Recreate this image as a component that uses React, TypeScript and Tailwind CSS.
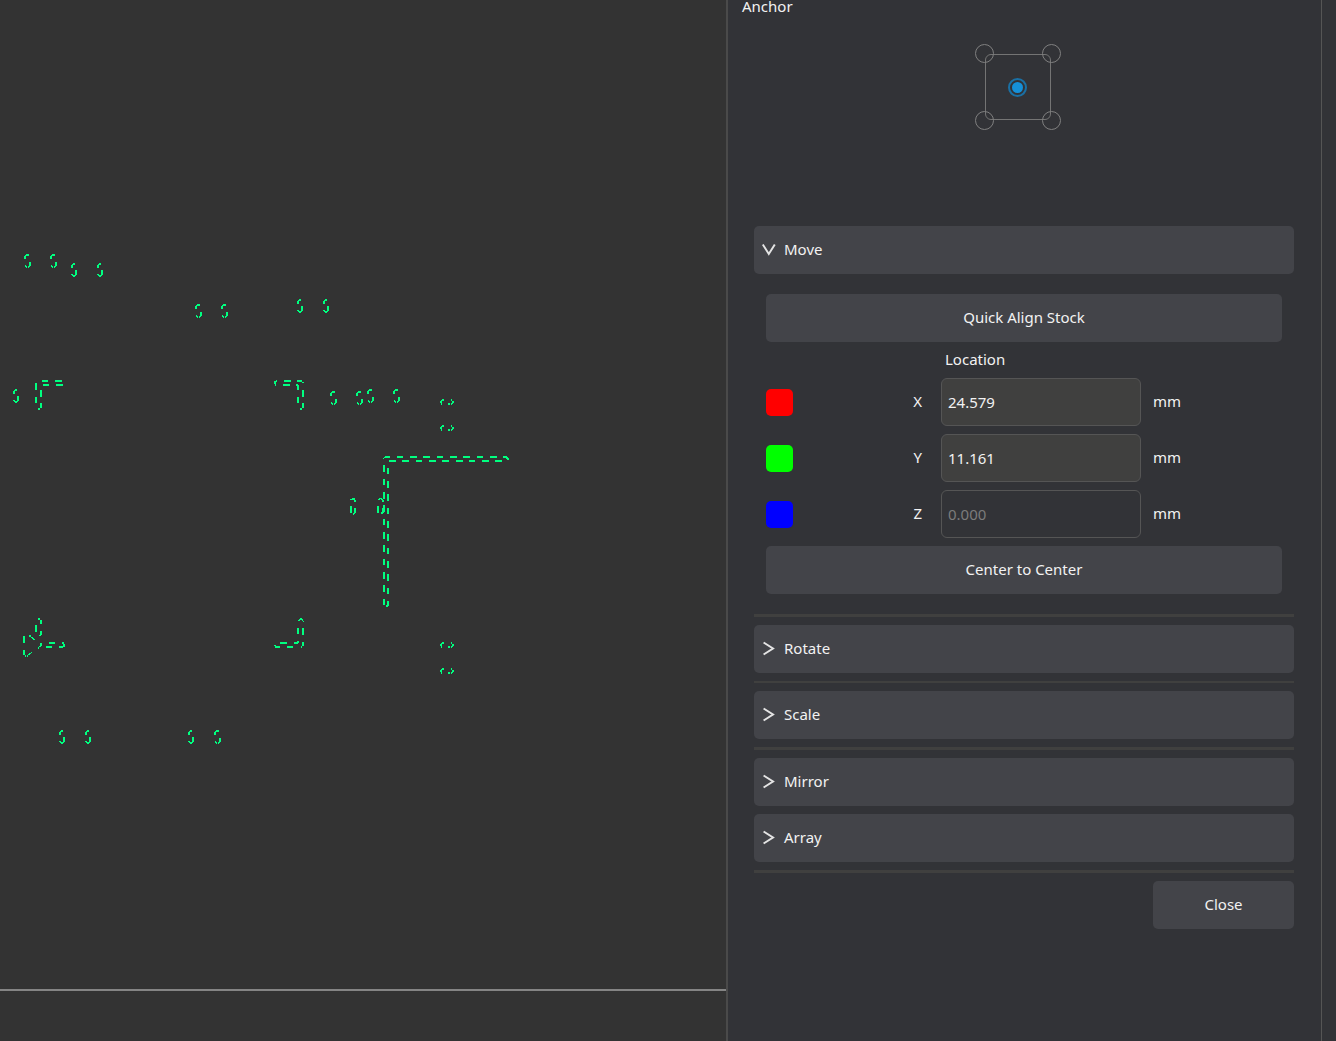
import { useState } from "react";

type Rect = [number, number, number, number];
type Point = [number, number];

const WIDE_PAD: Rect[] = [
  [2, 0, 3, 2], [1, 1, 1, 1], [0, 2, 2, 3], [5, 8, 2, 4], [4, 12, 2, 1], [4, 13, 1, 1], [1, 11, 1, 2], [2, 12, 1, 2],
];
const WIDE_PADS: Point[] = [
  [24, 254], [50, 254], [195, 304], [221, 304], [330, 391], [356, 391], [367, 389], [393, 389], [214, 730],
];

const NARROW_PAD: Rect[] = [
  [2, 0, 2, 2], [1, 1, 1, 1], [0, 2, 2, 3], [4, 7, 2, 5], [0, 11, 2, 1], [1, 12, 4, 1], [2, 13, 2, 1],
];
const NARROW_PADS: Point[] = [
  [71, 263], [97, 263], [13, 389], [297, 299], [323, 299], [59, 730], [85, 730], [188, 730],
];

const FLAT_PAD: Rect[] = [
  [2, 0, 2, 2], [1, 1, 1, 1], [0, 2, 2, 2], [1, 4, 1, 2], [8, 4, 2, 2], [11, 0, 1, 2], [12, 2, 2, 2], [11, 4, 2, 1], [11, 5, 1, 1],
];
const FLAT_PADS: Point[] = [[440, 399], [440, 425], [440, 642], [440, 668]];

const TRACES: Rect[] = [
  // upper-left corner
  [42, 380, 6, 2], [55, 380, 7, 2], [43, 384, 6, 2], [56, 384, 7, 2], [35, 383, 2, 7], [40, 390, 2, 7],
  [35, 397, 2, 6], [40, 403, 2, 5], [38, 408, 2, 2],
  // upper-right corner
  [274, 381, 2, 3], [275, 384, 1, 2], [276, 380, 1, 2], [284, 380, 7, 2], [283, 384, 7, 2], [297, 380, 5, 2],
  [302, 382, 2, 1], [296, 384, 2, 2], [297, 385, 2, 5], [302, 390, 2, 7], [297, 397, 2, 6], [302, 403, 2, 5], [300, 408, 2, 2],
  // long trace, horizontal arm
  [383, 458, 1, 1], [384, 457, 1, 1], [385, 456, 5, 2], [397, 456, 6, 2], [410, 456, 7, 2], [423, 456, 7, 2],
  [437, 456, 6, 2], [450, 456, 7, 2], [463, 456, 7, 2], [477, 456, 6, 2], [490, 456, 7, 2], [503, 456, 4, 2],
  [506, 457, 2, 2], [507, 458, 2, 2],
  [389, 460, 7, 2], [402, 460, 7, 2], [416, 460, 6, 2], [429, 460, 7, 2], [442, 460, 7, 2], [456, 460, 7, 2],
  [469, 460, 6, 2], [482, 460, 7, 2], [495, 460, 7, 2],
  // long trace, vertical arm
  [383, 465, 2, 7], [383, 479, 2, 6], [383, 492, 2, 7], [383, 505, 2, 7], [383, 519, 2, 6], [383, 532, 2, 7],
  [383, 545, 2, 7], [383, 559, 2, 6], [383, 572, 2, 7], [383, 585, 2, 7], [383, 599, 2, 6],
  [387, 468, 2, 6], [387, 481, 2, 7], [387, 494, 2, 7], [387, 508, 2, 6], [387, 521, 2, 7], [387, 534, 2, 7],
  [387, 548, 2, 6], [387, 561, 2, 7], [387, 574, 2, 7], [387, 588, 2, 6], [387, 601, 2, 5], [386, 605, 2, 2],
  // slots beside the vertical arm
  [350, 499, 2, 1], [352, 498, 3, 2], [354, 500, 2, 2], [350, 506, 2, 7], [354, 508, 2, 5], [353, 513, 2, 1], [353, 514, 1, 1],
  [378, 499, 2, 1], [379, 498, 3, 1], [381, 499, 2, 1], [382, 500, 2, 2], [377, 506, 2, 7], [382, 508, 2, 5], [381, 512, 2, 2],
  // lower-left corner
  [38, 618, 2, 2], [40, 620, 2, 4], [35, 625, 2, 7], [40, 631, 2, 4], [39, 635, 2, 1], [23, 636, 2, 7],
  [29, 635, 2, 2], [31, 637, 2, 1], [32, 638, 2, 1], [33, 639, 2, 1], [23, 650, 2, 5], [25, 655, 1, 2],
  [27, 655, 1, 2], [28, 654, 2, 1], [29, 653, 2, 1], [31, 652, 1, 1], [40, 643, 2, 3], [39, 646, 2, 1], [38, 647, 1, 2],
  [49, 642, 6, 2], [46, 646, 6, 2], [62, 642, 2, 2], [63, 644, 2, 3], [59, 646, 4, 2],
  // lower-right corner
  [300, 618, 2, 1], [299, 619, 4, 1], [298, 620, 2, 1], [302, 620, 1, 1], [303, 621, 1, 1], [297, 628, 2, 6],
  [302, 628, 2, 7], [280, 642, 7, 2], [287, 646, 6, 2], [275, 646, 5, 2], [274, 645, 2, 1], [294, 642, 4, 2],
  [297, 641, 2, 2], [302, 642, 2, 4], [301, 646, 1, 2],
];

const toPath = (rects: Rect[], [dx, dy]: Point = [0, 0]) =>
  rects.map(([x, y, w, h]) => `M${x + dx} ${y + dy}h${w}v${h}h${-w}z`).join("");

const TOOLPATH = [
  toPath(TRACES),
  ...WIDE_PADS.map((p) => toPath(WIDE_PAD, p)),
  ...NARROW_PADS.map((p) => toPath(NARROW_PAD, p)),
  ...FLAT_PADS.map((p) => toPath(FLAT_PAD, p)),
].join("");

function Preview() {
  return (
    <main className="flex min-w-0 flex-1 flex-col overflow-hidden bg-[#333333]">
      <svg width="520" height="760" shapeRendering="crispEdges" role="img" aria-label="Toolpath preview" className="shrink-0">
        <path d={TOOLPATH} fill="#00ff80" />
      </svg>
      <div className="mt-auto h-[52px] shrink-0 border-t-2 border-[#858585]" />
    </main>
  );
}

function Chevron({ open }: { open: boolean }) {
  return (
    <svg width="14" height="16" viewBox="0 0 14 16" fill="none" stroke="#e4e4e4" strokeWidth="2" aria-hidden="true">
      <path d={open ? "M.8 3.5L6.8 13L12.8 3.5" : "M1.6 2.5L11 8.5L1.6 14.5"} />
    </svg>
  );
}

function SectionHeader({ title, open, onToggle }: { title: string; open: boolean; onToggle: () => void }) {
  return (
    <button
      type="button"
      aria-expanded={open}
      onClick={onToggle}
      className="flex h-12 w-full items-center gap-2 rounded-[5px] bg-[#434449] px-2 pb-0.5 text-left"
    >
      <Chevron open={open} />
      {title}
    </button>
  );
}

const ANCHORS = [
  { id: "top-left", place: "col-start-1 row-start-1" },
  { id: "top-right", place: "col-start-3 row-start-1" },
  { id: "center", place: "col-start-2 row-start-2" },
  { id: "bottom-left", place: "col-start-1 row-start-3" },
  { id: "bottom-right", place: "col-start-3 row-start-3" },
];

function AnchorPicker() {
  const [anchor, setAnchor] = useState("center");
  return (
    <div role="radiogroup" aria-label="Anchor" className="relative size-[86px]">
      <div className="absolute inset-2.5 rounded-md border border-[#747474]" />
      <div className="relative grid size-full content-between justify-between [grid-template:19px_19px_19px/19px_19px_19px]">
        {ANCHORS.map(({ id, place }) => (
          <input
            key={id}
            type="radio"
            name="anchor"
            aria-label={id}
            value={id}
            checked={anchor === id}
            onChange={() => setAnchor(id)}
            className={`${place} size-[19px] appearance-none rounded-full border border-[#808080] checked:border-2 checked:border-[#1a70a4] checked:bg-[#1590d8] checked:bg-clip-content checked:p-0.5`}
          />
        ))}
      </div>
    </div>
  );
}

const AXES = [
  { axis: "X", swatch: "bg-[#ff0000]", value: "24.579", disabled: false },
  { axis: "Y", swatch: "bg-[#00ff00]", value: "11.161", disabled: false },
  { axis: "Z", swatch: "bg-[#0000ff]", value: "0.000", disabled: true },
];

const COLUMNS = "grid grid-cols-[27px_1fr_200px_129px] items-center gap-x-3";

function MovePanel() {
  return (
    <div className="px-3 py-5">
      <button type="button" className="h-12 w-full rounded-[5px] bg-[#434449] pb-0.5">Quick Align Stock</button>
      <div className={`${COLUMNS} h-9 pb-0.5`}>
        <span className="col-start-3 pl-1">Location</span>
      </div>
      <div className="flex flex-col gap-2">
        {AXES.map(({ axis, swatch, value, disabled }) => (
          <div key={axis} className={COLUMNS}>
            <span className={`size-[27px] rounded-[5px] ${swatch}`} />
            <label htmlFor={`location-${axis}`} className="pr-[7px] pb-0.5 text-right">{axis}</label>
            <input
              id={`location-${axis}`}
              defaultValue={value}
              disabled={disabled}
              className="h-12 w-full rounded-md border border-[#555555] bg-[#40403f] px-1.5 disabled:bg-transparent disabled:text-[#7c7c7c]"
            />
            <span className="pb-0.5">mm</span>
          </div>
        ))}
        <button type="button" className="h-12 w-full rounded-[5px] bg-[#434449] pb-0.5">Center to Center</button>
      </div>
    </div>
  );
}

export default function App() {
  const [open, setOpen] = useState("Move");
  const toggle = (name: string) => setOpen(open === name ? "" : name);
  const header = (name: string) => <SectionHeader title={name} open={open === name} onToggle={() => toggle(name)} />;

  return (
    <div className="flex min-h-screen bg-[#323337] font-['Noto_Sans',sans-serif] text-[15px] leading-5 text-[#f2f2f2]">
      <Preview />
      <aside className="w-[596px] shrink-0 overflow-hidden border-r border-l-2 border-r-[#555555] border-l-[#4a4a4a]">
        <h2 className="pl-3.5 leading-3">Anchor</h2>
        <div className="flex h-[214px] justify-center pt-8 pr-3.5">
          <AnchorPicker />
        </div>
        <div className="flex flex-col gap-2 pr-[27px] pl-[26px]">
          <section>
            {header("Move")}
            {open === "Move" && <MovePanel />}
            <hr className="border-t-3 border-[#40403f]" />
          </section>
          {header("Rotate")}
          <hr className="border-t-2 border-[#40403f]" />
          {header("Scale")}
          <hr className="border-t-3 border-[#40403f]" />
          {header("Mirror")}
          {header("Array")}
          <hr className="border-t-3 border-[#40403f]" />
          <button type="button" className="h-12 w-[141px] self-end rounded-[5px] bg-[#434449] pb-0.5">Close</button>
        </div>
      </aside>
      <div className="w-3.5 shrink-0" />
    </div>
  );
}
